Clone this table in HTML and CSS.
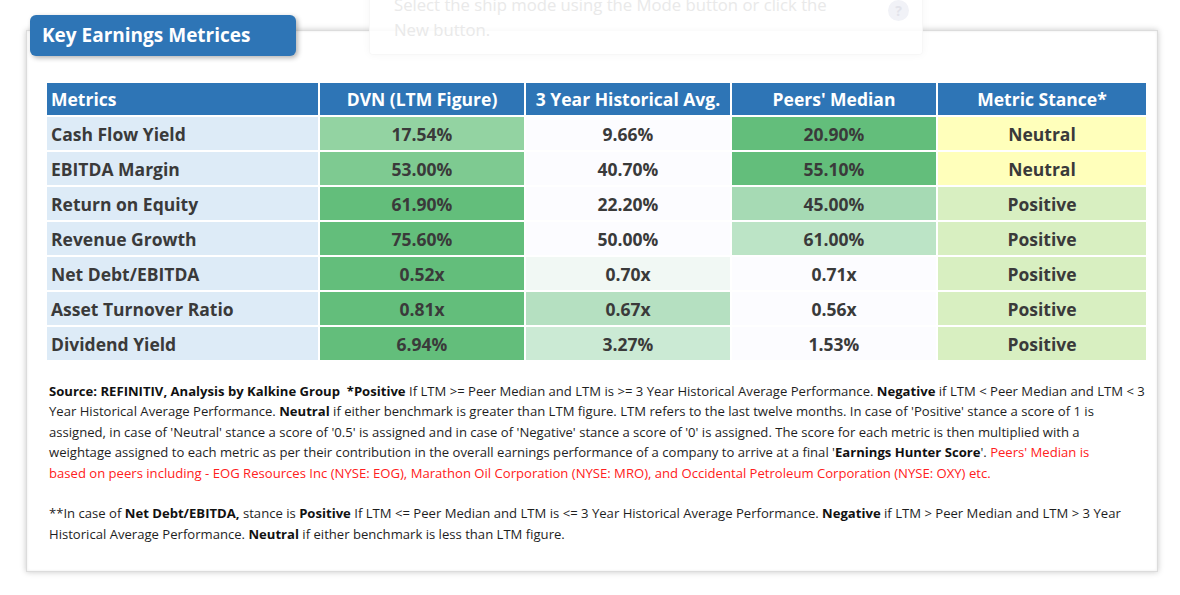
FILE: index.html
```html
<!DOCTYPE html>
<html>
<head>
<meta charset="utf-8">
<link rel="stylesheet" href="styles.css">
</head>
<body>
<div class="page">
  <div class="tip">
    <div class="tip-text">Select the ship mode using the Mode button or click the<br>New button.</div>
    <div class="tip-icon">?</div>
  </div>
  <div class="card">
    <div class="badge">Key Earnings Metrices</div>
    <div class="grid">
      <div class="h left">Metrics</div>
      <div class="h">DVN (LTM Figure)</div>
      <div class="h">3 Year Historical Avg.</div>
      <div class="h">Peers' Median</div>
      <div class="h">Metric Stance*</div>

      <div class="m">Cash Flow Yield</div>
      <div class="c g2">17.54%</div>
      <div class="c w">9.66%</div>
      <div class="c g1">20.90%</div>
      <div class="c neu">Neutral</div>

      <div class="m">EBITDA Margin</div>
      <div class="c g3">53.00%</div>
      <div class="c w">40.70%</div>
      <div class="c g1">55.10%</div>
      <div class="c neu">Neutral</div>

      <div class="m">Return on Equity</div>
      <div class="c g1">61.90%</div>
      <div class="c w">22.20%</div>
      <div class="c g4">45.00%</div>
      <div class="c pos">Positive</div>

      <div class="m">Revenue Growth</div>
      <div class="c g1">75.60%</div>
      <div class="c w">50.00%</div>
      <div class="c g5">61.00%</div>
      <div class="c pos">Positive</div>

      <div class="m">Net Debt/EBITDA</div>
      <div class="c g1">0.52x</div>
      <div class="c g8">0.70x</div>
      <div class="c w">0.71x</div>
      <div class="c pos">Positive</div>

      <div class="m">Asset Turnover Ratio</div>
      <div class="c g1">0.81x</div>
      <div class="c g6">0.67x</div>
      <div class="c w">0.56x</div>
      <div class="c pos">Positive</div>

      <div class="m">Dividend Yield</div>
      <div class="c g1">6.94%</div>
      <div class="c g7">3.27%</div>
      <div class="c w">1.53%</div>
      <div class="c pos">Positive</div>
    </div>
    <div class="notes">
      <div class="ln"><b>Source: REFINITIV, Analysis by Kalkine Group</b>&nbsp; <b>*Positive</b> If LTM &gt;= Peer Median and LTM is &gt;= 3 Year Historical Average Performance. <b>Negative</b> if LTM &lt; Peer Median and LTM &lt; 3</div>
      <div class="ln">Year Historical Average Performance. <b>Neutral</b> if either benchmark is greater than LTM figure. LTM refers to the last twelve months. In case of 'Positive' stance a score of 1 is</div>
      <div class="ln">assigned, in case of 'Neutral' stance a score of '0.5' is assigned and in case of 'Negative' stance a score of '0' is assigned. The score for each metric is then multiplied with a</div>
      <div class="ln">weightage assigned to each metric as per their contribution in the overall earnings performance of a company to arrive at a final '<b>Earnings Hunter Score</b>'. <span class="red">Peers' Median is</span></div>
      <div class="ln red">based on peers including - EOG Resources Inc (NYSE: EOG), Marathon Oil Corporation (NYSE: MRO), and Occidental Petroleum Corporation (NYSE: OXY) etc.</div>
      <div class="ln gap">**In case of <b>Net Debt/EBITDA,</b> stance is <b>Positive</b> If LTM &lt;= Peer Median and LTM is &lt;= 3 Year Historical Average Performance. <b>Negative</b> if LTM &gt; Peer Median and LTM &gt; 3 Year</div>
      <div class="ln">Historical Average Performance. <b>Neutral</b> if either benchmark is less than LTM figure.</div>
    </div>
  </div>
</div>
</body>
</html>
```

FILE: styles.css
```css
* { box-sizing: border-box; }
html, body { margin: 0; padding: 0; background: #ffffff; }
body {
  font-family: "Open Sans", Lato, "Liberation Sans", sans-serif;
  width: 1180px;
  height: 595px;
  overflow: hidden;
}
.page {
  position: relative;
  padding: 30px 0 0 26px;
}
.card {
  position: relative;
  width: 1132px;
  height: 542px;
  background: #ffffff;
  border: 1px solid #dcdcdc;
  box-shadow: 0 0 6px rgba(0, 0, 0, 0.22), inset 0 0 3px rgba(0, 0, 0, 0.08);
  padding: 52px 0 0 20px;
}
.badge {
  position: absolute;
  left: 3px;
  top: -16px;
  width: 266px;
  height: 41px;
  background: #2E75B6;
  border-radius: 6px;
  box-shadow: 2px 2px 5px rgba(0, 0, 0, 0.3);
  color: #ffffff;
  font-weight: 700;
  font-size: 19px;
  line-height: 41px;
  padding-left: 12px;
  z-index: 2;
  white-space: nowrap;
}
.tip {
  position: absolute;
  left: 369px;
  top: -13px;
  width: 554px;
  height: 68px;
  background: rgba(255, 255, 255, 0.88);
  border: 1px solid rgba(0, 0, 0, 0.03);
  border-radius: 4px;
  box-shadow: 0 0 8px rgba(0, 0, 0, 0.04);
  z-index: 3;
  display: flex;
  justify-content: space-between;
  padding: 4px 13px 0 24px;
}
.tip-text {
  color: #e9e9e9;
  font-size: 16.7px;
  line-height: 25px;
  white-space: nowrap;
}
.tip-icon {
  width: 21px;
  height: 21px;
  border-radius: 50%;
  background: #f1f2f7;
  color: #e2e3ea;
  font-size: 14px;
  font-weight: 700;
  text-align: center;
  line-height: 21px;
  margin-top: 8px;
}
.grid {
  display: grid;
  grid-template-columns: 271px 204px 204px 204px 208px;
  grid-template-rows: 32px repeat(7, 33px);
  gap: 2px;
  width: 1097px;
}
.h {
  background: #2E75B6;
  color: #ffffff;
  font-weight: 700;
  font-size: 17.5px;
  display: flex;
  align-items: center;
  justify-content: center;
  white-space: nowrap;
}
.h.left { justify-content: flex-start; padding-left: 4px; }
.m, .c {
  font-weight: 700;
  font-size: 17.5px;
  color: #3a3a3a;
  display: flex;
  align-items: center;
  white-space: nowrap;
}
.m { background: #DDEBF7; padding-left: 4px; }
.c { justify-content: center; }
.w { background: #FCFCFF; }
.g1 { background: #63BE7B; }
.g2 { background: #93D3A2; }
.g3 { background: #7ECA91; }
.g4 { background: #A6DAB4; }
.g5 { background: #BCE4C6; }
.g6 { background: #B5E0C1; }
.g7 { background: #CBEAD4; }
.g8 { background: #F1F8F4; }
.neu { background: #FFFFBB; }
.pos { background: #D8EFC1; }
.notes {
  margin-top: 21px;
  padding-left: 2px;
  font-size: 13.1px;
  line-height: 20.4px;
  color: #1e1e1e;
}
.ln { white-space: nowrap; }
.ln.gap { margin-top: 20.4px; }
.notes b { font-weight: 700; color: #111; }
.red { color: #ff2020; }
```
